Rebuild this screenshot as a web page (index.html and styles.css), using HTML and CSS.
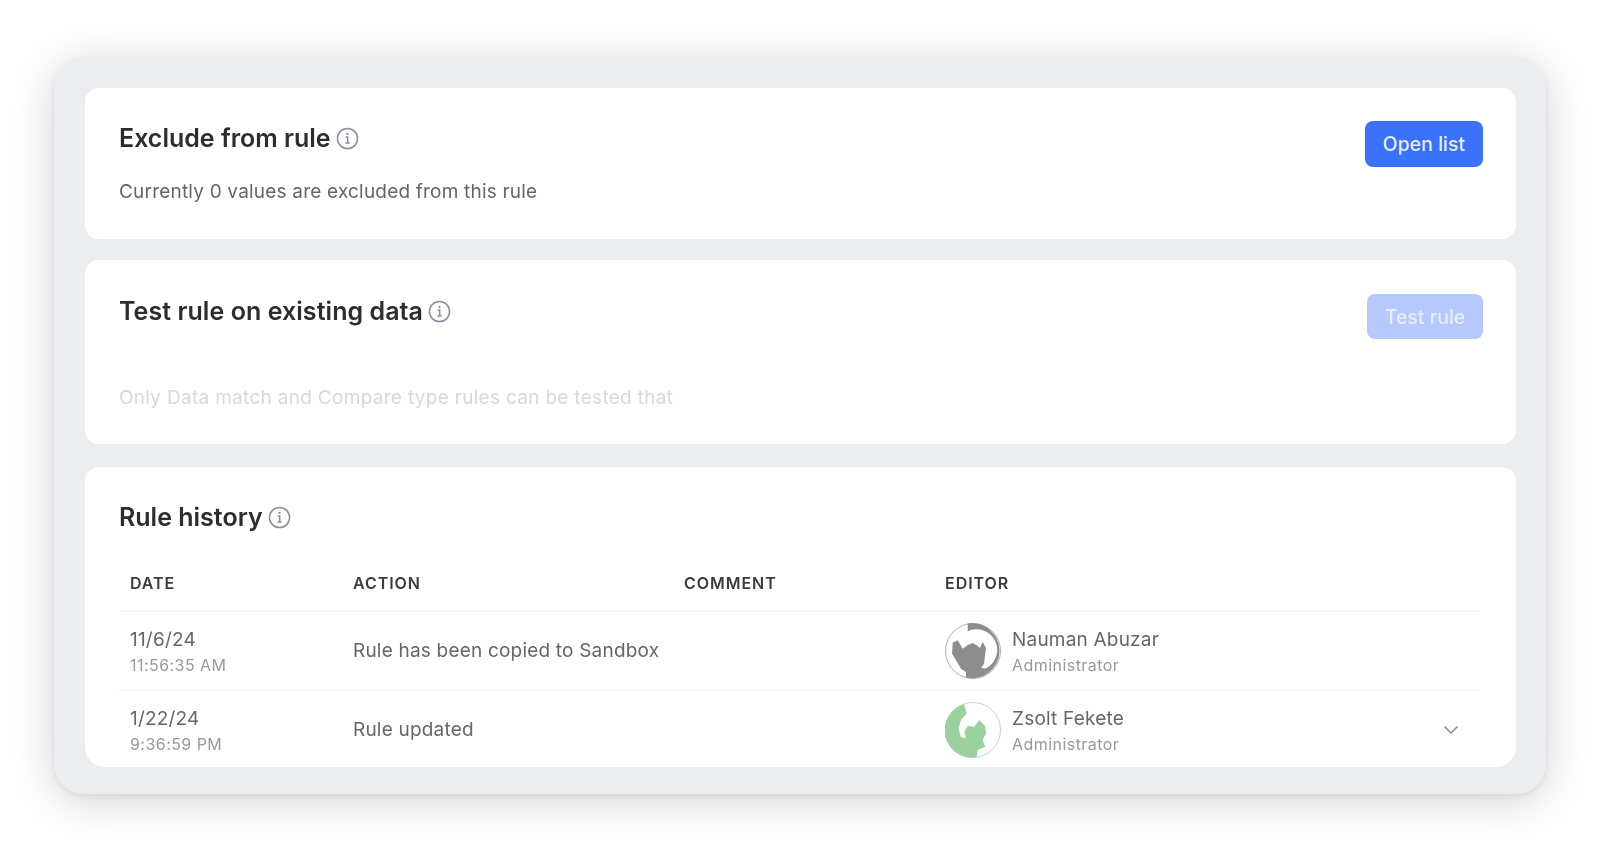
FILE: index.html
```html
<!DOCTYPE html>
<html lang="en">
<head>
    <meta charset="UTF-8">
    <meta name="viewport" content="width=device-width, initial-scale=1.0">
    <title>Rule settings</title>
    <link rel="stylesheet" href="styles.css">
</head>
<body>
    <div class="panel">
        <section class="card card-exclude">
            <div class="card-text">
                <h2>Exclude from rule
                    <svg class="info" viewBox="0 0 24 24"><circle cx="12" cy="12" r="10.5"/><path d="M10 10.5h2.2v6M9.8 16.8h4.6"/><circle class="dot" cx="12" cy="7.2" r="1.2"/></svg>
                </h2>
                <p class="desc">Currently 0 values are excluded from this rule</p>
            </div>
            <button class="btn">Open list</button>
        </section>

        <section class="card card-test">
            <div class="card-text">
                <h2 class="title-wide">Test rule on existing data
                    <svg class="info" viewBox="0 0 24 24"><circle cx="12" cy="12" r="10.5"/><path d="M10 10.5h2.2v6M9.8 16.8h4.6"/><circle class="dot" cx="12" cy="7.2" r="1.2"/></svg>
                </h2>
                <p class="desc desc-off">Only Data match and Compare type rules can be tested that</p>
            </div>
            <button class="btn btn-off">Test rule</button>
        </section>

        <section class="card card-history">
            <h2>Rule history
                <svg class="info" viewBox="0 0 24 24"><circle cx="12" cy="12" r="10.5"/><path d="M10 10.5h2.2v6M9.8 16.8h4.6"/><circle class="dot" cx="12" cy="7.2" r="1.2"/></svg>
            </h2>
            <div class="history">
                <div class="row row-head">
                    <div>DATE</div>
                    <div>ACTION</div>
                    <div>COMMENT</div>
                    <div>EDITOR</div>
                </div>
                <div class="row">
                    <div class="two-line">
                        <span class="main">11/6/24</span>
                        <span class="sub">11:56:35 AM</span>
                    </div>
                    <div class="main">Rule has been copied to Sandbox</div>
                    <div></div>
                    <div class="editor">
                        <svg class="avatar" viewBox="0 0 56 56">
                            <circle class="ring-gray" cx="28" cy="28" r="27.5"/>
                            <path class="fill-gray" d="M22.7 .6A27.5 27.5 0 1 1 21 54.6L21 49 16 45.7 11 37.3 7 30.7 7.7 19.7 12.7 17.3 17.7 25.7 22.7 22 27.7 20 32.7 23 35 25 37.7 18.7 41 25 39 40.7 36 45 40.5 45.5A20 20 0 0 0 22.7 8.3Z"/>
                        </svg>
                        <div class="two-line">
                            <span class="main">Nauman Abuzar</span>
                            <span class="sub">Administrator</span>
                        </div>
                    </div>
                </div>
                <div class="row">
                    <div class="two-line">
                        <span class="main">1/22/24</span>
                        <span class="sub">9:36:59 PM</span>
                    </div>
                    <div class="main">Rule updated</div>
                    <div></div>
                    <div class="editor">
                        <svg class="avatar" viewBox="0 0 56 56">
                            <circle class="ring-green" cx="28" cy="28" r="27.5"/>
                            <path class="fill-green" d="M19 1.9 21.7 11.3 16 18 13.7 26.3 16 35.3 21 36.3 19.3 29.7 22.7 24 29.3 24.7 34.3 18 40 24 41 31.3 37.7 38 40 44.7 32.7 48 31.7 55.3A27.5 27.5 0 0 1 19 1.9Z"/>
                        </svg>
                        <div class="two-line">
                            <span class="main">Zsolt Fekete</span>
                            <span class="sub">Administrator</span>
                        </div>
                        <svg class="chevron" viewBox="0 0 16 10"><path d="M1.5 1.5 8 8l6.5-6.5"/></svg>
                    </div>
                </div>
            </div>
        </section>
    </div>
</body>
</html>
```

FILE: styles.css
```css
* {
    box-sizing: border-box;
}
body {
    margin: 0;
    height: 852px;
    padding: 58px 54px;
    background: #fff;
    font-family: Inter, "Noto Sans", sans-serif;
    overflow: hidden;
}
.panel {
    height: 736px;
    padding: 30px 30px 27px 31px;
    background: #ebedf0;
    border-radius: 30px;
    box-shadow: 0 2px 6px rgba(0, 0, 0, 0.08), 0 6px 44px rgba(0, 0, 0, 0.18);
    filter: blur(0.35px);
}
.card {
    background: #fff;
    border-radius: 14px;
    padding: 0 33px 0 34px;
}
.card-exclude {
    height: 151px;
    margin-bottom: 21px;
    padding-top: 33px;
    display: flex;
    justify-content: space-between;
}
.card-test {
    height: 184px;
    margin-bottom: 23px;
    padding-top: 34px;
    display: flex;
    justify-content: space-between;
}
.card-history {
    height: 300px;
    padding-top: 35px;
    padding-right: 36px;
    border-radius: 14px 14px 20px 20px;
    overflow: hidden;
}
.card-text {
    padding-top: 2px;
}
h2 {
    margin: 0;
    display: flex;
    align-items: center;
    gap: 5px;
    font-size: 25px;
    line-height: 30px;
    font-weight: 600;
    color: #2b2d30;
}
.title-wide {
    letter-spacing: 0.06px;
}
.info {
    width: 23px;
    height: 23px;
    fill: none;
    stroke: #8b90a0;
    stroke-width: 1.6;
}
.info .dot {
    fill: #8b90a0;
    stroke: none;
}
.desc {
    margin: 27px 0 0;
    font-size: 19px;
    line-height: 24px;
    letter-spacing: 0.2px;
    color: #63666b;
}
.desc-off {
    margin-top: 60px;
    letter-spacing: 0.3px;
    color: #d5d8dc;
}
.btn {
    width: 118px;
    height: 46px;
    border: none;
    border-radius: 8px;
    background: #3b72fb;
    color: #e8efff;
    font-family: inherit;
    font-size: 19.5px;
    font-weight: 500;
}
.btn-off {
    width: 116px;
    height: 45px;
    background: #b5c9fc;
    color: #e6edfe;
}
.row {
    display: grid;
    grid-template-columns: 223px 331px 261px 1fr;
    align-items: center;
    height: 79px;
    padding-left: 11px;
    border-bottom: 1px solid #f2f3f4;
}
.row:last-child {
    height: 78px;
    border-bottom: none;
}
.row-head {
    height: 59px;
    margin-top: 21px;
    padding-top: 2px;
    font-size: 16px;
    font-weight: 600;
    letter-spacing: 0.95px;
    color: #3a3c40;
}
.two-line {
    display: flex;
    flex-direction: column;
    gap: 3px;
}
.main {
    font-size: 19px;
    line-height: 24px;
    letter-spacing: 0.2px;
    color: #63666b;
}
.sub {
    font-size: 16px;
    line-height: 20px;
    letter-spacing: 0.45px;
    color: #97999d;
}
.editor {
    display: flex;
    align-items: center;
    gap: 11px;
}
.avatar {
    width: 56px;
    height: 56px;
}
.ring-gray, .ring-green {
    fill: #fff;
    stroke: #8d8d8d;
    stroke-width: 0.7;
}
.ring-green {
    stroke: #9bd19c;
}
.fill-gray {
    fill: #8d8d8d;
}
.fill-green {
    fill: #9bd19c;
}
.chevron {
    width: 16px;
    height: 10px;
    margin-left: auto;
    margin-right: 21px;
    fill: none;
    stroke: #85878b;
    stroke-width: 1.5;
}
```
